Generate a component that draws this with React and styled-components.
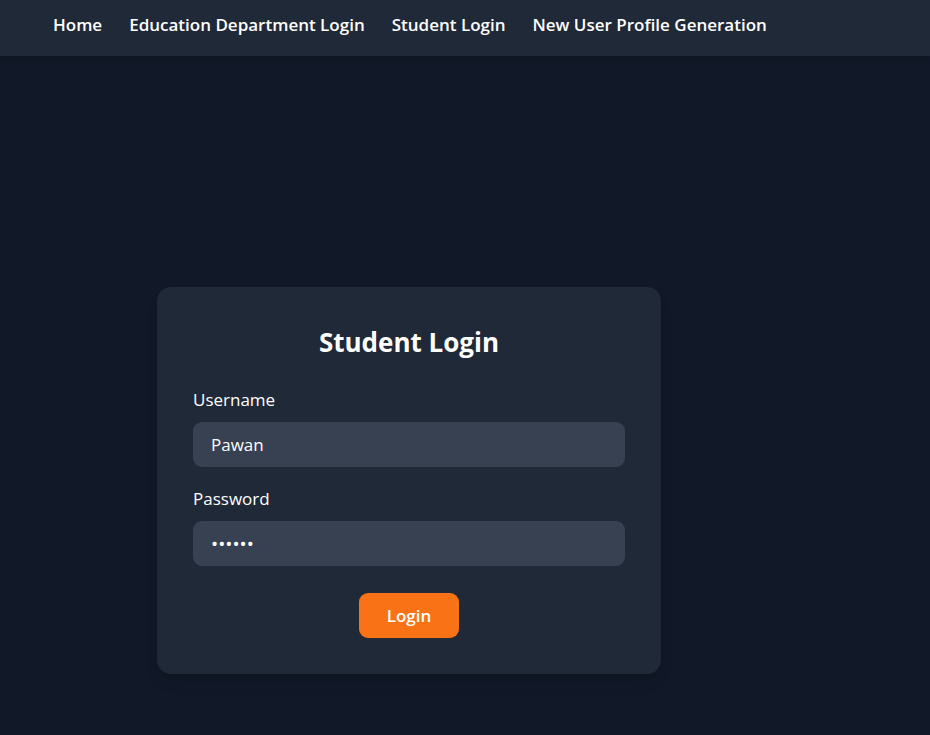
import React from "react";
import styled, { createGlobalStyle } from "styled-components";

const GlobalStyle = createGlobalStyle`
  *, *::before, *::after { box-sizing: border-box; }
  body { margin: 0; background: #111827; color: #fff; font-family: "Open Sans", "Noto Sans", sans-serif; font-size: 17px; line-height: 27px; }
  input, button { font: inherit; color: inherit; }
`;

const Page = styled.div`
  min-height: 100vh;
  display: flex;
  flex-direction: column;
`;

const NavBar = styled.nav`
  display: flex;
  flex-wrap: wrap;
  gap: 27px;
  padding: 11px 53px 18px;
  background: #1f2937;
  box-shadow: 0 4px 6px rgba(0, 0, 0, 0.1);
`;

const NavLink = styled.a`
  color: #fff;
  font-weight: 600;
  text-decoration: none;
`;

const Main = styled.main`
  flex: 1;
  padding: 231px 269px 61px 157px;
`;

const Card = styled.form`
  max-width: 504px;
  padding: 36px;
  border-radius: 14px;
  background: #1f2937;
  box-shadow: 0 10px 15px -3px rgba(0, 0, 0, 0.1), 0 4px 6px -4px rgba(0, 0, 0, 0.1);
`;

const Title = styled.h1`
  margin: 0 0 25px;
  font-size: 26px;
  line-height: 38px;
  font-weight: 700;
  text-align: center;
`;

const Field = styled.div`
  display: grid;
  gap: 9px;
  margin-bottom: ${({ $last }) => ($last ? 27 : 18)}px;
`;

const Label = styled.label`
  justify-self: start;
`;

const Input = styled.input`
  width: 100%;
  height: 45px;
  padding: 9px 18px;
  border: 0;
  border-radius: 9px;
  background: #374151;

  &[type="password"] {
    font-size: 19px;
  }
`;

const Actions = styled.div`
  display: flex;
  justify-content: center;
`;

const Button = styled.button`
  min-width: 100px;
  padding: 9px 27px;
  border: 0;
  border-radius: 9px;
  background: #f97316;
  font-weight: 600;
`;

const links = ["Home", "Education Department Login", "Student Login", "New User Profile Generation"];

export default function App() {
  return (
    <Page>
      <GlobalStyle />
      <NavBar>
        {links.map((text) => (
          <NavLink key={text} href="#">{text}</NavLink>
        ))}
      </NavBar>
      <Main>
        <Card onSubmit={(e) => e.preventDefault()}>
          <Title>Student Login</Title>
          <Field>
            <Label htmlFor="username">Username</Label>
            <Input id="username" type="text" defaultValue="Pawan" />
          </Field>
          <Field $last>
            <Label htmlFor="password">Password</Label>
            <Input id="password" type="password" defaultValue="123456" />
          </Field>
          <Actions>
            <Button type="submit">Login</Button>
          </Actions>
        </Card>
      </Main>
    </Page>
  );
}
